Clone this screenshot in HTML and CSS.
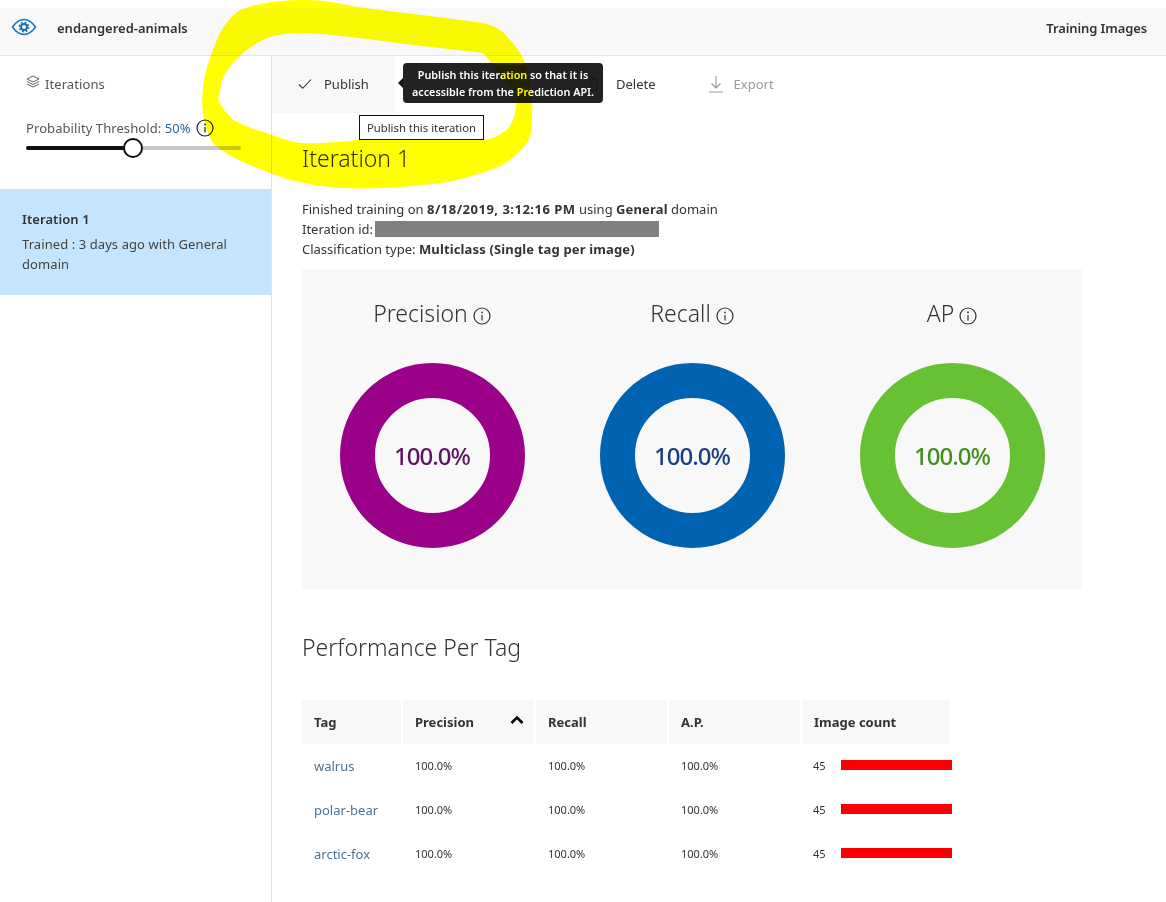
FILE: index.html
```html
<!DOCTYPE html>
<html lang="en">
<head>
    <meta charset="UTF-8">
    <meta name="viewport" content="width=device-width, initial-scale=1.0">
    <title>Performance</title>
    <link rel="stylesheet" href="styles.css">
</head>
<body>
    <svg class="defs" width="0" height="0">
        <symbol id="info" viewBox="0 0 18 18">
            <circle cx="9" cy="9" r="8" fill="none" stroke="currentColor" stroke-width="1.2"/>
            <path d="M9 8v5.5" fill="none" stroke="currentColor" stroke-width="1.2"/>
            <circle cx="9" cy="5.4" r="0.9" fill="currentColor"/>
        </symbol>
    </svg>

    <div class="page">
        <header class="topbar">
            <svg class="topbar__eye" width="26" height="18" viewBox="0 0 26 18">
                <path d="M1.5 9C5 4 9 1.5 13 1.5S21 4 24.500 9C21 14 17 16.500 13 16.500S5 14 1.500 9Z" fill="none" stroke="#1a6fae" stroke-width="1.5"/>
                <circle cx="13" cy="9" r="3" fill="none" stroke="#1a6fae" stroke-width="2"/>
                <circle cx="13" cy="9" r="4.600" fill="none" stroke="#1a6fae" stroke-width="1.600" stroke-dasharray="1.800 1.800"/>
            </svg>
            <span class="topbar__name">endangered-animals</span>
            <span class="topbar__link">Training Images</span>
        </header>

        <div class="layout">
            <aside class="sidebar">
                <div class="sidebar__title">
                    <svg width="14" height="14" viewBox="0 0 14 14" fill="none" stroke="#555" stroke-width="0.900">
                        <path d="M7 1l6 3-6 3-6-3z"/>
                        <path d="M1 6.500l6 3 6-3"/>
                        <path d="M1 9l6 3 6-3"/>
                    </svg>
                    <span>Iterations</span>
                </div>
                <div class="threshold">
                    <span>Probability Threshold: <span class="threshold__value">50%</span></span>
                    <svg class="info" width="18" height="18"><use href="#info"/></svg>
                </div>
                <div class="slider">
                    <div class="slider__fill"></div>
                    <div class="slider__thumb"></div>
                </div>
                <div class="iteration">
                    <div class="iteration__name">Iteration 1</div>
                    <div>Trained : 3 days ago with General domain</div>
                </div>
            </aside>

            <main class="main">
                <div class="toolbar">
                    <div class="toolbar__btn toolbar__btn_hover">
                        <svg width="14" height="12" viewBox="0 0 14 12" fill="none" stroke="#333" stroke-width="1.100"><path d="M1 6.500l3.800 3.800L13 1.500"/></svg>
                        <span>Publish</span>
                    </div>
                    <div class="toolbar__btn toolbar__btn_delete">
                        <svg width="12" height="14" viewBox="0 0 12 14" fill="none" stroke="#555"><path d="M1 3h10M3 3v10h6V3M4.500 3V1h3v2"/></svg>
                        <span>Delete</span>
                    </div>
                    <div class="toolbar__btn toolbar__btn_export">
                        <svg width="14" height="18" viewBox="0 0 14 18" fill="none" stroke="#999" stroke-width="1.100"><path d="M7 1v12M2.500 8.500L7 13l4.500-4.500M0 17h14"/></svg>
                        <span>Export</span>
                    </div>
                    <div class="tooltip">Publish this iteration so that it is<br>accessible from the Prediction API.</div>
                    <div class="hint">Publish this iteration</div>
                </div>

                <div class="content">
                    <h1 class="title">Iteration 1</h1>
                    <div class="details">
                        <div>Finished training on <b class="details__date">8/18/2019, 3:12:16 PM</b> using <b>General</b> domain</div>
                        <div class="details__id">Iteration id: <span class="redacted"></span></div>
                        <div>Classification type: <b>Multiclass (Single tag per image)</b></div>
                    </div>

                    <section class="metrics">
                        <div class="metric">
                            <div class="metric__label">Precision <svg class="metric__info" width="18" height="18"><use href="#info"/></svg></div>
                            <div class="donut donut_purple">100.0%</div>
                        </div>
                        <div class="metric">
                            <div class="metric__label">Recall <svg class="metric__info" width="18" height="18"><use href="#info"/></svg></div>
                            <div class="donut donut_blue">100.0%</div>
                        </div>
                        <div class="metric">
                            <div class="metric__label">AP <svg class="metric__info" width="18" height="18"><use href="#info"/></svg></div>
                            <div class="donut donut_green">100.0%</div>
                        </div>
                    </section>

                    <h2 class="subtitle">Performance Per Tag</h2>

                    <div class="tags">
                        <div class="tags__head">Tag</div>
                        <div class="tags__head tags__head_sorted">Precision
                            <svg width="14" height="9" viewBox="0 0 14 9" fill="none" stroke="#000" stroke-width="2.600"><path d="M1.500 8L7 2.500 12.500 8"/></svg>
                        </div>
                        <div class="tags__head">Recall</div>
                        <div class="tags__head">A.P.</div>
                        <div class="tags__head">Image count</div>

                        <a class="tags__name">walrus</a>
                        <div class="tags__val">100.0%</div>
                        <div class="tags__val">100.0%</div>
                        <div class="tags__val">100.0%</div>
                        <div class="tags__count"><span>45</span><div class="tags__bar"></div></div>

                        <a class="tags__name">polar-bear</a>
                        <div class="tags__val">100.0%</div>
                        <div class="tags__val">100.0%</div>
                        <div class="tags__val">100.0%</div>
                        <div class="tags__count"><span>45</span><div class="tags__bar"></div></div>

                        <a class="tags__name">arctic-fox</a>
                        <div class="tags__val">100.0%</div>
                        <div class="tags__val">100.0%</div>
                        <div class="tags__val">100.0%</div>
                        <div class="tags__count"><span>45</span><div class="tags__bar"></div></div>
                    </div>
                </div>
            </main>
        </div>
    </div>

    <!-- marker scribble drawn over the screenshot -->
    <svg class="scribble" width="1166" height="902" viewBox="0 0 1166 902">
        <path fill="#ffff00" fill-rule="evenodd" d="M240 10C258 3 280 0 305 0C328 0 345 5 372 9C410 14 450 18 483 23C497 26 505 33 510 40C520 50 526 62 528 75C531 90 533 105 532 117C532 128 531 137 527 143C515 158 505 165 490 170C470 177 450 183 423 185C395 188 365 189 340 188C315 186 290 181 270 173C258 168 228 158 213 143C206 132 203 118 202 103C202 90 204 79 207 67C211 55 215 44 220 33C225 24 232 15 240 10Z M218 100C219 92 221 85 223 77C228 68 235 60 243 53C250 47 258 42 267 38C278 34 290 33 303 33C330 34 360 38 390 42C420 46 450 49 483 53C490 60 495 69 500 75C506 81 512 86 517 92C518 99 516 106 515 113C514 120 510 126 507 130C500 135 492 139 484 140L358 140C338 142 318 144 300 143C288 141 277 137 267 133C255 130 243 125 233 120C227 114 222 107 218 100Z"/>
    </svg>
</body>
</html>
```

FILE: styles.css
```css
* {
    box-sizing: border-box;
}

html, body {
    height: 100%;
}

body {
    margin: 0;
    background: white;
    color: #333;
    font-family: 'Noto Sans', 'Open Sans', sans-serif;
    font-size: 13px;
    overflow: hidden;
}

b {
    font-weight: 700;
    letter-spacing: 0.15px;
}

.defs {
    position: absolute;
}

.scribble {
    position: absolute;
    top: 0;
    left: 0;
    mix-blend-mode: multiply;
    pointer-events: none;
}

.page {
    height: 100%;
    padding-top: 8px;
    display: flex;
    flex-direction: column;
}

.topbar {
    height: 48px;
    flex-shrink: 0;
    display: flex;
    align-items: center;
    padding: 0 19px 8px 11px;
    background: #f8f8f8;
    border-bottom: 1px solid #e6e6e6;
}

.topbar__eye {
    margin-right: 20px;
    margin-top: -1px;
}

.topbar__name {
    font-weight: 600;
    flex: 1;
}

.topbar__link {
    font-weight: 600;
    letter-spacing: -0.1px;
}

.layout {
    flex: 1;
    display: flex;
}

.sidebar {
    width: 272px;
    flex-shrink: 0;
    border-right: 1px solid #e2e2e2;
    color: #555;
    letter-spacing: 0.08px;
}

.sidebar__title {
    display: flex;
    align-items: center;
    gap: 5px;
    padding: 0 0 2px 26px;
    height: 58px;
}

.sidebar__title svg {
    margin-top: -4px;
}

.threshold {
    display: flex;
    align-items: center;
    gap: 5px;
    padding-left: 26px;
    height: 28px;
}

.threshold__value {
    color: #2a6496;
}

.info {
    color: #222;
}

.slider {
    position: relative;
    width: 215px;
    height: 4px;
    margin: 4px 0 39px 26px;
    background: #c8c8c8;
    border-radius: 2px;
}

.slider__fill {
    width: 107px;
    height: 100%;
    background: #111;
    border-radius: 2px;
}

.slider__thumb {
    position: absolute;
    top: -8px;
    left: 97px;
    width: 20px;
    height: 20px;
    background: white;
    border: 2px solid #111;
    border-radius: 50%;
}

.iteration {
    width: 271px;
    height: 106px;
    padding: 20px 30px 0 22px;
    background: #c5e4fd;
    color: #444;
    line-height: 20px;
}

.iteration__name {
    margin-bottom: 5px;
    font-weight: 600;
    color: #333;
}

.main {
    flex: 1;
}

.toolbar {
    position: relative;
    height: 57px;
    display: flex;
    align-items: center;
}

.toolbar__btn {
    display: flex;
    align-items: center;
    height: 100%;
    padding-bottom: 2px;
}

.toolbar__btn_hover {
    width: 123px;
    padding-left: 26px;
    gap: 12px;
    background: #f8f8f8;
}

.toolbar__btn_delete {
    margin-left: 193px;
    gap: 16px;
}

.toolbar__btn_export {
    margin-left: 53px;
    gap: 11px;
    color: #999;
}

.tooltip {
    position: absolute;
    top: 7px;
    left: 131px;
    width: 200px;
    height: 40px;
    padding-top: 3px;
    background: rgba(20, 20, 20, 0.94);
    border-radius: 4px;
    color: white;
    font-size: 10.800px;
    font-weight: 600;
    line-height: 17px;
    text-align: center;
    white-space: nowrap;
}

.tooltip::before {
    content: '';
    position: absolute;
    top: 15px;
    left: -5px;
    border-top: 5px solid transparent;
    border-bottom: 5px solid transparent;
    border-right: 5px solid #141414;
}

.hint {
    position: absolute;
    top: 59px;
    left: 87px;
    width: 125px;
    height: 25px;
    background: white;
    border: 1px solid #111;
    font-size: 11.300px;
    line-height: 23px;
    text-align: center;
}

.content {
    padding-left: 30px;
}

.title {
    margin: 27px 0 0;
    font-size: 23px;
    font-weight: 300;
    line-height: 36px;
}

.details {
    margin-top: 23px;
    line-height: 20px;
}

.details__date {
    letter-spacing: 0.5px;
}

.details__id {
    display: flex;
    align-items: center;
    gap: 2px;
}

.redacted {
    width: 284px;
    height: 16px;
    background: #808080;
}

.metrics {
    width: 780px;
    height: 320px;
    margin-top: 10px;
    background: #f8f8f8;
    display: flex;
}

.metric {
    width: 260px;
    display: flex;
    flex-direction: column;
    align-items: center;
    padding-top: 26px;
}

.metric__label {
    height: 36px;
    display: flex;
    align-items: center;
    gap: 5px;
    font-size: 23px;
    font-weight: 300;
    line-height: 36px;
}

.metric__info {
    margin-top: 5px;
    color: #333;
}

.donut {
    width: 185px;
    height: 185px;
    margin-top: 32px;
    border: 35px solid;
    border-radius: 50%;
    display: flex;
    align-items: center;
    justify-content: center;
    font-size: 24px;
    font-weight: 500;
    letter-spacing: -1px;
}

.donut_purple {
    border-color: #9b0089;
    color: #5f1262;
}

.donut_blue {
    border-color: #0063b1;
    color: #1a3f7e;
}

.donut_green {
    border-color: #68c135;
    color: #3f8f1e;
}

.subtitle {
    margin: 40px 0 0;
    font-size: 23px;
    font-weight: 300;
    line-height: 36px;
}

.tags {
    margin-top: 35px;
    display: grid;
    grid-template-columns: 99px 131px 131px 131px 148px;
    grid-template-rows: 44px 44px 44px 44px;
    column-gap: 2px;
    align-items: center;
}

.tags__head {
    height: 44px;
    padding-left: 12px;
    background: #f8f8f8;
    display: flex;
    align-items: center;
    justify-content: space-between;
    font-weight: 700;
}

.tags__head_sorted {
    padding-right: 10px;
}

.tags__head_sorted svg {
    margin-top: -6px;
}

.tags__name {
    padding-left: 12px;
    color: #4b7394;
}

.tags__val {
    padding-left: 12px;
    padding-bottom: 2px;
    font-size: 11px;
}

.tags__count {
    padding-left: 11px;
    padding-bottom: 2px;
    display: flex;
    align-items: center;
    gap: 15px;
    font-size: 11px;
}

.tags__bar {
    width: 111px;
    height: 10px;
    flex-shrink: 0;
    background: #fa0000;
}
```
